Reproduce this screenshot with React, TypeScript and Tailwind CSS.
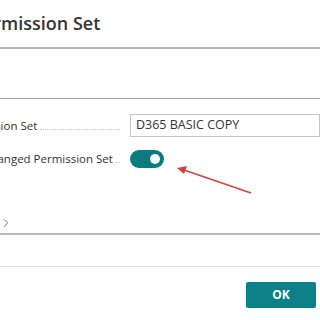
import { ChevronRight } from 'lucide-react'

const font = { fontFamily: '"Open Sans", "Noto Sans", sans-serif' }

function FieldLabel({ text }: { text: string }) {
  return (
    <div className="flex items-end w-[189px] shrink-0">
      <span className="whitespace-nowrap text-[11.5px] text-[#333]">{text}</span>
      <span className="flex-1 ml-[3px] mb-[4px] border-b border-dotted border-[#c4c4c4]" />
    </div>
  )
}

export default function App() {
  return (
    <div className="relative w-[320px] h-[320px] overflow-hidden bg-white" style={font}>
      <div className="h-[49px] border-b-2 border-[#b4b4b4] flex items-center">
        <h1 className="ml-[-76px] whitespace-nowrap text-[18px] font-semibold text-[#333] leading-none pb-[1px]">
          Copy Permission Set
        </h1>
      </div>

      <div className="h-[50px] bg-[#fdfdfd] border-b border-[#a6a6a6]" />

      <div className="ml-[-69px] pt-[15px] flex flex-col gap-[12px]">
        <div className="flex items-center h-[23px]">
          <FieldLabel text="New Permission Set" />
          <div className="ml-[10px] flex-1 h-[23px] border border-[#c6c6c6] flex items-center px-[5px] text-[12.5px] text-[#333]">
            D365 BASIC COPY
          </div>
        </div>
        <div className="flex items-center h-[18px] pt-[1px]">
          <FieldLabel text="Notify on Changed Permission Set" />
          <div className="ml-[10px] w-[34px] h-[18px] rounded-full bg-[#0b7b80] flex items-center justify-end pr-[4px]">
            <span className="w-[10px] h-[10px] rounded-full bg-white" />
          </div>
        </div>
      </div>

      <div className="mt-[48px] h-[16px] flex items-center">
        <ChevronRight className="ml-[-1px] w-[14px] h-[14px] text-[#6e6e6e]" strokeWidth={1.6} />
      </div>

      <div className="mt-[2px] border-b-2 border-[#b8b8c2]" />
      <div className="mt-[31px] border-b border-[#e0e0e0]" />

      <div className="flex justify-end pr-[4px] pt-[15px]">
        <button className="w-[70px] h-[26px] rounded-[2px] bg-[#0b8086] text-white text-[12px] font-bold">
          OK
        </button>
      </div>

      <svg className="absolute left-0 top-0" width="320" height="320" viewBox="0 0 320 320">
        <line x1="251" y1="193" x2="184" y2="170" stroke="#d8403a" strokeWidth="1.6" />
        <polygon points="177,168 187,166 184,174" fill="#d8403a" />
      </svg>
    </div>
  )
}
